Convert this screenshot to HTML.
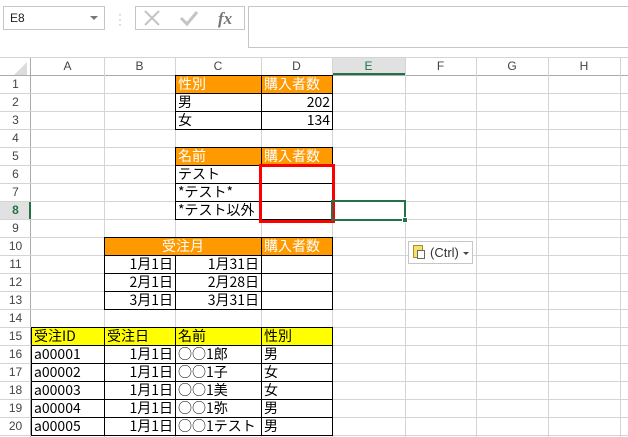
<!DOCTYPE html>
<html><head><meta charset="utf-8">
<style>
*{margin:0;padding:0;box-sizing:border-box}
body{width:628px;height:437px;overflow:hidden;background:#fff;position:relative;font-family:"Liberation Sans","Noto Sans CJK JP",sans-serif;}
div{position:absolute}
.v{width:1px;background:#d4d4d4;top:58px;bottom:0}
.h{height:1px;background:#d4d4d4;left:0;right:0}
.ch{top:58px;height:17px;font-size:12px;color:#444;text-align:center;line-height:17px}
.rh{left:0;width:31px;height:18px;font-size:12px;color:#444;text-align:center;line-height:19px}
.c{border:1px solid #000;height:19px;font-size:14px;line-height:17px;padding:0 2px;white-space:nowrap;color:#000;font-family:"Noto Sans CJK JP","Liberation Sans",sans-serif}
.o{background:#ff9900;color:#fff}
.y{background:#ffff00}
.r{text-align:right}
</style></head><body>
<!-- name box -->
<div style="left:3px;top:6px;width:102px;height:24px;border:1px solid #c6c6c6;font-size:12px;line-height:22px;padding-left:6px;color:#222">E8</div>
<div style="left:90px;top:16px;width:0;height:0;border-left:4px solid transparent;border-right:4px solid transparent;border-top:4px solid #777"></div>
<div style="left:118px;top:12px;color:#aaa;font-size:12px;line-height:5px">·<br>·<br>·</div>
<div style="left:135px;top:6px;width:110px;height:24px;border:1px solid #c6c6c6"></div>
<svg style="position:absolute;left:135px;top:6px" width="110" height="24">
<path d="M10 5 L24 19 M24 5 L10 19" stroke="#c4c4c4" stroke-width="2"/>
<path d="M46 12 L52 18 L62 6" stroke="#c4c4c4" stroke-width="3" fill="none"/>
<text x="83" y="18" font-family="Liberation Serif" font-style="italic" font-weight="bold" font-size="17" fill="#777">fx</text>
</svg>
<div style="left:248px;top:6px;width:390px;height:42px;border:1px solid #c6c6c6"></div>
<!-- header area -->
<div style="left:0;top:57px;width:628px;height:1px;background:#d4d4d4"></div>
<div style="left:0;top:75px;width:628px;height:1px;background:#ababab"></div>
<div style="left:30px;top:58px;width:1px;height:379px;background:#ababab"></div>
<div style="left:14px;top:62px;width:0;height:0;border-left:13px solid transparent;border-bottom:13px solid #dcdcdc"></div>
<div style="left:332px;top:58px;width:73px;height:17px;background:#e1e1e1;border-bottom:2px solid #217346"></div>
<div style="left:0;top:201px;width:31px;height:19px;background:#e1e1e1;border-right:2px solid #217346"></div>
<!-- vertical grid -->
<div class="v" style="left:104px"></div><div class="v" style="left:175px"></div><div class="v" style="left:261px"></div><div class="v" style="left:332px"></div><div class="v" style="left:405px"></div><div class="v" style="left:476px"></div><div class="v" style="left:548px"></div><div class="v" style="left:620px"></div>
<!-- horizontal grid -->
<div class="h" style="top:93px"></div><div class="h" style="top:111px"></div><div class="h" style="top:129px"></div><div class="h" style="top:147px"></div><div class="h" style="top:165px"></div><div class="h" style="top:183px"></div><div class="h" style="top:201px"></div><div class="h" style="top:219px"></div><div class="h" style="top:237px"></div><div class="h" style="top:255px"></div><div class="h" style="top:273px"></div><div class="h" style="top:291px"></div><div class="h" style="top:309px"></div><div class="h" style="top:327px"></div><div class="h" style="top:345px"></div><div class="h" style="top:363px"></div><div class="h" style="top:381px"></div><div class="h" style="top:399px"></div><div class="h" style="top:417px"></div><div class="h" style="top:435px"></div>
<!-- column headers -->
<div class="ch" style="left:31px;width:73px">A</div><div class="ch" style="left:104px;width:71px">B</div><div class="ch" style="left:175px;width:86px">C</div><div class="ch" style="left:261px;width:71px">D</div><div class="ch" style="left:332px;width:73px;color:#217346">E</div><div class="ch" style="left:405px;width:71px">F</div><div class="ch" style="left:476px;width:72px">G</div><div class="ch" style="left:548px;width:72px">H</div>
<!-- row headers -->
<div class="rh" style="top:75px">1</div><div class="rh" style="top:93px">2</div><div class="rh" style="top:111px">3</div><div class="rh" style="top:129px">4</div><div class="rh" style="top:147px">5</div><div class="rh" style="top:165px">6</div><div class="rh" style="top:183px">7</div><div class="rh" style="top:201px;color:#217346;font-weight:bold">8</div><div class="rh" style="top:219px">9</div><div class="rh" style="top:237px">10</div><div class="rh" style="top:255px">11</div><div class="rh" style="top:273px">12</div><div class="rh" style="top:291px">13</div><div class="rh" style="top:309px">14</div><div class="rh" style="top:327px">15</div><div class="rh" style="top:345px">16</div><div class="rh" style="top:363px">17</div><div class="rh" style="top:381px">18</div><div class="rh" style="top:399px">19</div><div class="rh" style="top:417px">20</div>
<!-- table 1 -->
<div class="c o" style="left:175px;top:75px;width:87px">性別</div><div class="c o" style="left:261px;top:75px;width:72px">購入者数</div>
<div class="c" style="left:175px;top:93px;width:87px">男</div><div class="c r" style="left:261px;top:93px;width:72px">202</div>
<div class="c" style="left:175px;top:111px;width:87px">女</div><div class="c r" style="left:261px;top:111px;width:72px">134</div>
<!-- table 2 -->
<div class="c o" style="left:175px;top:147px;width:87px">名前</div><div class="c o" style="left:261px;top:147px;width:72px">購入者数</div>
<div class="c" style="left:175px;top:165px;width:87px">テスト</div><div class="c" style="left:261px;top:165px;width:72px"></div>
<div class="c" style="left:175px;top:183px;width:87px">*テスト*</div><div class="c" style="left:261px;top:183px;width:72px"></div>
<div class="c" style="left:175px;top:201px;width:87px">*テスト以外</div><div class="c" style="left:261px;top:201px;width:72px"></div>
<!-- table 3 -->
<div class="c o" style="left:104px;top:237px;width:158px;text-align:center">受注月</div><div class="c o" style="left:261px;top:237px;width:72px">購入者数</div>
<div class="c r" style="left:104px;top:255px;width:72px">1月1日</div><div class="c r" style="left:175px;top:255px;width:87px">1月31日</div><div class="c" style="left:261px;top:255px;width:72px"></div>
<div class="c r" style="left:104px;top:273px;width:72px">2月1日</div><div class="c r" style="left:175px;top:273px;width:87px">2月28日</div><div class="c" style="left:261px;top:273px;width:72px"></div>
<div class="c r" style="left:104px;top:291px;width:72px">3月1日</div><div class="c r" style="left:175px;top:291px;width:87px">3月31日</div><div class="c" style="left:261px;top:291px;width:72px"></div>
<!-- table 4 -->
<div class="c y" style="left:31px;top:327px;width:74px">受注ID</div><div class="c y" style="left:104px;top:327px;width:72px">受注日</div><div class="c y" style="left:175px;top:327px;width:87px">名前</div><div class="c y" style="left:261px;top:327px;width:72px">性別</div>
<div class="c" style="left:31px;top:345px;width:74px">a00001</div><div class="c r" style="left:104px;top:345px;width:72px">1月1日</div><div class="c" style="left:175px;top:345px;width:87px">○○1郎</div><div class="c" style="left:261px;top:345px;width:72px">男</div>
<div class="c" style="left:31px;top:363px;width:74px">a00002</div><div class="c r" style="left:104px;top:363px;width:72px">1月1日</div><div class="c" style="left:175px;top:363px;width:87px">○○1子</div><div class="c" style="left:261px;top:363px;width:72px">女</div>
<div class="c" style="left:31px;top:381px;width:74px">a00003</div><div class="c r" style="left:104px;top:381px;width:72px">1月1日</div><div class="c" style="left:175px;top:381px;width:87px">○○1美</div><div class="c" style="left:261px;top:381px;width:72px">女</div>
<div class="c" style="left:31px;top:399px;width:74px">a00004</div><div class="c r" style="left:104px;top:399px;width:72px">1月1日</div><div class="c" style="left:175px;top:399px;width:87px">○○1弥</div><div class="c" style="left:261px;top:399px;width:72px">男</div>
<div class="c" style="left:31px;top:417px;width:74px">a00005</div><div class="c r" style="left:104px;top:417px;width:72px">1月1日</div><div class="c" style="left:175px;top:417px;width:87px">○○1テスト</div><div class="c" style="left:261px;top:417px;width:72px">男</div>
<!-- red box -->
<div style="left:259px;top:164px;width:76px;height:59px;border:3px solid #ff0000"></div>
<!-- selection -->
<div style="left:331px;top:200px;width:75px;height:21px;border:2px solid #217346"></div>
<div style="left:402px;top:217px;width:6px;height:6px;background:#217346;border:1px solid #fff"></div>
<!-- paste options -->
<div style="left:408px;top:241px;width:65px;height:23px;border:1px solid #c6c6c6;background:#fff;font-size:13px;line-height:21px;padding-left:21px;color:#333">(Ctrl)</div>
<div style="left:413px;top:245px;width:10px;height:13px;background:#f3e36a;border:1px solid #b08a30"></div>
<div style="left:417px;top:250px;width:8px;height:9px;background:#fff;border:1px solid #666"></div>
<div style="left:463px;top:252px;width:0;height:0;border-left:3px solid transparent;border-right:3px solid transparent;border-top:3px solid #444"></div>
</body></html>
